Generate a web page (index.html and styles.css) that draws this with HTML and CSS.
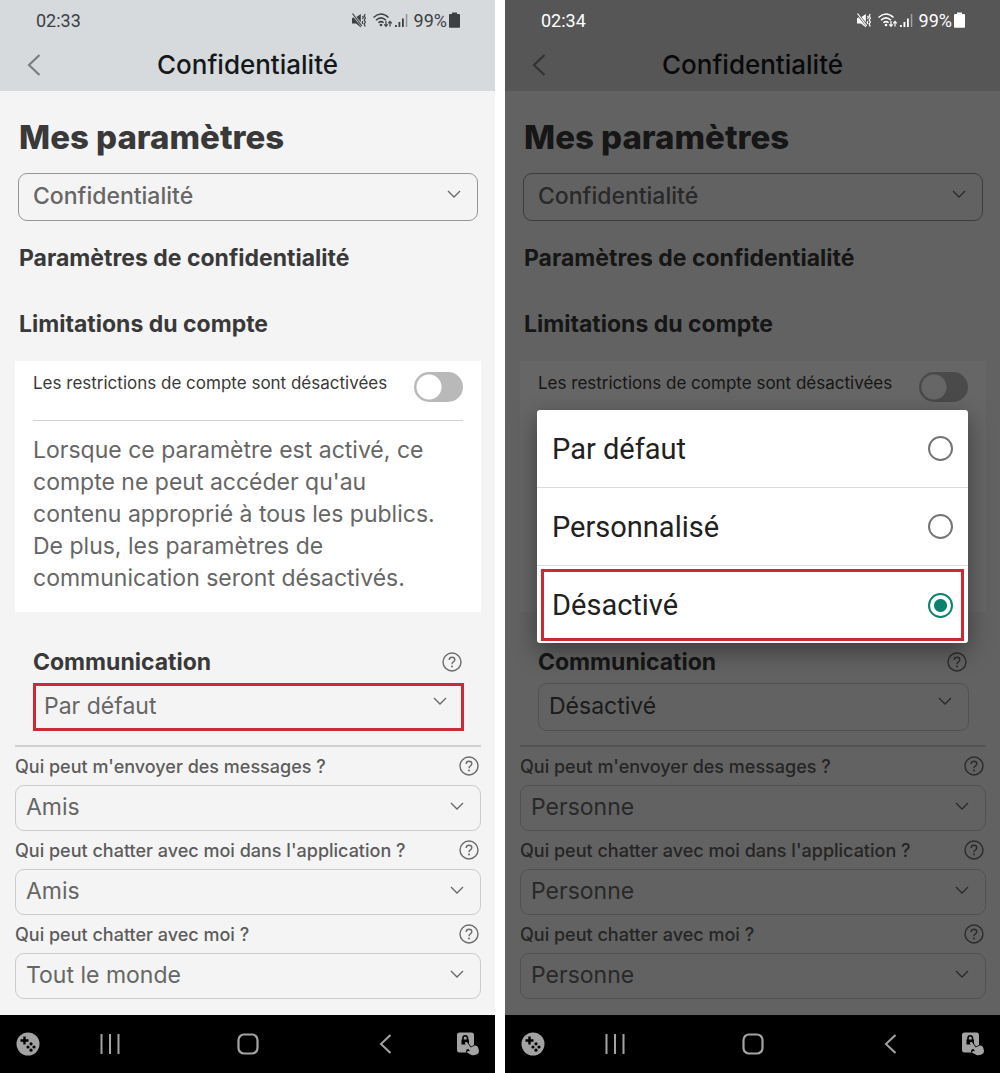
FILE: index.html
```
<!DOCTYPE html>
<html lang="fr">
<head>
    <meta charset="UTF-8">
    <meta name="viewport" content="width=device-width, initial-scale=1.0">
    <title>Confidentialité</title>
    <link rel="stylesheet" href="styles.css">
</head>
<body>
    <!-- icônes partagées -->
    <svg class="sprite" aria-hidden="true">
        <symbol id="i-mute" viewBox="0 0 15 15">
            <path d="M0 5.500L1.500 4.200L9 13.500V14.500L4 10.500H0z" fill="currentColor"/>
            <path d="M4.500 4L8.800 1v8.200z" fill="currentColor"/>
            <path d="M0.500 0.500L9.800 13" stroke="currentColor" stroke-width="1.200"/>
            <path d="M10.500 3l.8 1.500-.8 1.500M13.200 1l-1 2 1.200 2-1.200 2 1.200 2-1.200 2 1 2.500M10.800 8l-.6 1.500.8 1.500" stroke="currentColor" stroke-width="1.200" fill="none"/>
        </symbol>
        <symbol id="i-wifi" viewBox="0 0 19 15">
            <g fill="none" stroke="currentColor" stroke-width="1.500">
                <path d="M0.500 4.500q7.500-7 15 0M3 7.200q5-4.600 10 0M5.400 9.800q2.600-2.300 5.200 0"/>
                <path d="M13 8v5M11.300 11.300l1.700 2 1.700-2M17 13.500v-5M15.300 10.400l1.700-2 1.700 2" stroke-width="1.200"/>
            </g>
            <circle cx="8" cy="12" r="1.300" fill="currentColor"/>
        </symbol>
        <symbol id="i-signal" viewBox="0 0 13 15">
            <path d="M0 12h1.800v2H0zM3.500 9h1.800v5H3.500zM7 5.500h1.800V14H7z" fill="currentColor"/>
            <path d="M10.800 1h1.500v13h-1.500z" fill="currentColor" opacity=".45"/>
        </symbol>
        <symbol id="i-battery" viewBox="0 0 11 16">
            <path d="M3 0.500h5V2h2.200q.8 0 .8.800V15q0 .8-.8.800H.8Q0 15.800 0 15V2.800Q0 2 .8 2H3z" fill="currentColor"/>
        </symbol>
        <symbol id="i-back" viewBox="0 0 14 22">
            <path d="M12.500 1L2 11l10.500 10" fill="none" stroke="currentColor" stroke-width="2.200"/>
        </symbol>
        <symbol id="i-chevron" viewBox="0 0 14 8">
            <path d="M1 1l6 6 6-6" fill="none" stroke="currentColor" stroke-width="1.300"/>
        </symbol>
        <symbol id="i-help" viewBox="0 0 20 20">
            <g fill="none" stroke="currentColor" stroke-width="1.400">
                <circle cx="10" cy="10" r="9"/>
                <path d="M7.200 8Q7.200 5.300 10 5.300T12.800 7.700Q12.800 9 11.400 9.800T10 12.300"/>
            </g>
            <circle cx="10" cy="14.500" r="1" fill="currentColor"/>
        </symbol>
        <symbol id="i-game" viewBox="0 0 24 24">
            <circle cx="12" cy="12" r="11.500" fill="currentColor"/>
            <path d="M8.500 4.500v8M4.500 8.500h8" stroke="#000" stroke-width="2.400"/>
            <g fill="#000">
                <circle cx="15" cy="11.800" r="1.600"/>
                <circle cx="12" cy="15" r="1.600"/>
                <circle cx="18" cy="15" r="1.600"/>
                <circle cx="15" cy="18.200" r="1.600"/>
            </g>
        </symbol>
        <symbol id="i-recent" viewBox="0 0 20 22">
            <path d="M1.500 1v20M10 1v20M18.500 1v20" stroke="currentColor" stroke-width="2"/>
        </symbol>
        <symbol id="i-home" viewBox="0 0 22 22">
            <rect x="1.500" y="1.500" width="19" height="19" rx="5.500" fill="none" stroke="currentColor" stroke-width="2.200"/>
        </symbol>
        <symbol id="i-touch" viewBox="0 0 24 24">
            <path d="M3.500 .5h12q2.500 0 2.500 2.500v17.500H3.500Q1 20.500 1 18V3Q1 .5 3.500 .5z" fill="currentColor"/>
            <path d="M5.500 7.500h7.500v5H5.500z" fill="#000"/>
            <path d="M7 8V6q0-2.300 2.200-2.300T11.500 6v2" fill="none" stroke="#000" stroke-width="1.600"/>
            <path d="M9 10l2.800 0 3.200 4.500 5-2.500 3 1v11h-9l-4-4 .5-2.500 2.500-.5z" fill="#000"/>
            <path d="M9.300 10.300q1.200-.8 2 .3l3.400 5 4-2.100q2.200-.6 3.300 1.700l1 3.300q.3 2.500-2 3.800-3 1.500-5.500.8l-4.200-2.300q-.8-1.500 1-1.800l1.700.2-4.900-7.500q-.5-.8.200-1.400z" fill="currentColor"/>
        </symbol>
    </svg>

    <main class="screens">
        <!-- écran 1 : page de confidentialité -->
        <section class="phone">
            <div class="view">
                <div class="status">
                    <span class="time">02:33</span>
                    <span class="indicators">
                        <svg class="mute"><use href="#i-mute"/></svg>
                        <svg class="wifi"><use href="#i-wifi"/></svg>
                        <svg class="signal"><use href="#i-signal"/></svg>
                        <span>99%</span>
                        <svg class="battery"><use href="#i-battery"/></svg>
                    </span>
                </div>
                <header class="app-bar">
                    <button class="back" type="button" aria-label="Retour"><svg><use href="#i-back"/></svg></button>
                    <span class="app-title">Confidentialité</span>
                </header>
                <div class="content">
                    <h1>Mes paramètres</h1>
                    <div class="select-box section-select">
                        <select aria-label="Section"><option>Confidentialité</option></select>
                        <svg class="chevron"><use href="#i-chevron"/></svg>
                    </div>
                    <h2>Paramètres de confidentialité</h2>
                    <h2>Limitations du compte</h2>
                    <div class="card">
                        <div class="card-head">
                            <label for="restrict-1">Les restrictions de compte sont désactivées</label>
                            <input class="toggle" type="checkbox" id="restrict-1">
                        </div>
                        <p>Lorsque ce paramètre est activé, ce<br>compte ne peut accéder qu'au<br>contenu approprié à tous les publics.<br>De plus, les paramètres de<br>communication seront désactivés.</p>
                    </div>
                    <div class="communication">
                        <div class="label-row">
                            <label for="com-1">Communication</label>
                            <button class="help" type="button" aria-label="Aide"><svg><use href="#i-help"/></svg></button>
                        </div>
                        <div class="select-box marked">
                            <select id="com-1"><option>Par défaut</option><option>Personnalisé</option><option>Désactivé</option></select>
                            <svg class="chevron"><use href="#i-chevron"/></svg>
                        </div>
                    </div>
                    <div class="options">
                        <div class="label-row">
                            <label for="msg-1">Qui peut m'envoyer des messages ?</label>
                            <button class="help" type="button" aria-label="Aide"><svg><use href="#i-help"/></svg></button>
                        </div>
                        <div class="select-box">
                            <select id="msg-1"><option>Amis</option></select>
                            <svg class="chevron"><use href="#i-chevron"/></svg>
                        </div>
                        <div class="label-row">
                            <label for="app-1">Qui peut chatter avec moi dans l'application ?</label>
                            <button class="help" type="button" aria-label="Aide"><svg><use href="#i-help"/></svg></button>
                        </div>
                        <div class="select-box">
                            <select id="app-1"><option>Amis</option></select>
                            <svg class="chevron"><use href="#i-chevron"/></svg>
                        </div>
                        <div class="label-row">
                            <label for="chat-1">Qui peut chatter avec moi ?</label>
                            <button class="help" type="button" aria-label="Aide"><svg><use href="#i-help"/></svg></button>
                        </div>
                        <div class="select-box">
                            <select id="chat-1"><option>Tout le monde</option></select>
                            <svg class="chevron"><use href="#i-chevron"/></svg>
                        </div>
                    </div>
                </div>
            </div>
            <nav class="nav-bar">
                <button type="button" aria-label="Jeux"><svg class="big"><use href="#i-game"/></svg></button>
                <button type="button" aria-label="Récents"><svg class="recent"><use href="#i-recent"/></svg></button>
                <button type="button" aria-label="Accueil"><svg class="home"><use href="#i-home"/></svg></button>
                <button type="button" aria-label="Retour"><svg class="prev"><use href="#i-back"/></svg></button>
                <button type="button" aria-label="Verrouillage tactile"><svg class="big"><use href="#i-touch"/></svg></button>
            </nav>
        </section>

        <!-- écran 2 : choix ouvert par-dessus la page -->
        <section class="phone dimmed">
            <div class="view">
                <div class="status">
                    <span class="time">02:34</span>
                    <span class="indicators">
                        <svg class="mute"><use href="#i-mute"/></svg>
                        <svg class="wifi"><use href="#i-wifi"/></svg>
                        <svg class="signal"><use href="#i-signal"/></svg>
                        <span>99%</span>
                        <svg class="battery"><use href="#i-battery"/></svg>
                    </span>
                </div>
                <header class="app-bar">
                    <button class="back" type="button" aria-label="Retour"><svg><use href="#i-back"/></svg></button>
                    <span class="app-title">Confidentialité</span>
                </header>
                <div class="content">
                    <h1>Mes paramètres</h1>
                    <div class="select-box section-select">
                        <select aria-label="Section"><option>Confidentialité</option></select>
                        <svg class="chevron"><use href="#i-chevron"/></svg>
                    </div>
                    <h2>Paramètres de confidentialité</h2>
                    <h2>Limitations du compte</h2>
                    <div class="card">
                        <div class="card-head">
                            <label for="restrict-2">Les restrictions de compte sont désactivées</label>
                            <input class="toggle" type="checkbox" id="restrict-2">
                        </div>
                        <p></p>
                    </div>
                    <div class="communication">
                        <div class="label-row">
                            <label for="com-2">Communication</label>
                            <button class="help" type="button" aria-label="Aide"><svg><use href="#i-help"/></svg></button>
                        </div>
                        <div class="select-box">
                            <select id="com-2"><option>Désactivé</option></select>
                            <svg class="chevron"><use href="#i-chevron"/></svg>
                        </div>
                    </div>
                    <div class="options">
                        <div class="label-row">
                            <label for="msg-2">Qui peut m'envoyer des messages ?</label>
                            <button class="help" type="button" aria-label="Aide"><svg><use href="#i-help"/></svg></button>
                        </div>
                        <div class="select-box">
                            <select id="msg-2"><option>Personne</option></select>
                            <svg class="chevron"><use href="#i-chevron"/></svg>
                        </div>
                        <div class="label-row">
                            <label for="app-2">Qui peut chatter avec moi dans l'application ?</label>
                            <button class="help" type="button" aria-label="Aide"><svg><use href="#i-help"/></svg></button>
                        </div>
                        <div class="select-box">
                            <select id="app-2"><option>Personne</option></select>
                            <svg class="chevron"><use href="#i-chevron"/></svg>
                        </div>
                        <div class="label-row">
                            <label for="chat-2">Qui peut chatter avec moi ?</label>
                            <button class="help" type="button" aria-label="Aide"><svg><use href="#i-help"/></svg></button>
                        </div>
                        <div class="select-box">
                            <select id="chat-2"><option>Personne</option></select>
                            <svg class="chevron"><use href="#i-chevron"/></svg>
                        </div>
                    </div>
                </div>
                <div class="overlay"></div>
                <div class="dialog" role="dialog" aria-label="Communication">
                    <label class="choice">Par défaut<input type="radio" name="choice"></label>
                    <label class="choice">Personnalisé<input type="radio" name="choice"></label>
                    <label class="choice marked">Désactivé<input type="radio" name="choice" checked></label>
                </div>
            </div>
            <nav class="nav-bar">
                <button type="button" aria-label="Jeux"><svg class="big"><use href="#i-game"/></svg></button>
                <button type="button" aria-label="Récents"><svg class="recent"><use href="#i-recent"/></svg></button>
                <button type="button" aria-label="Accueil"><svg class="home"><use href="#i-home"/></svg></button>
                <button type="button" aria-label="Retour"><svg class="prev"><use href="#i-back"/></svg></button>
                <button type="button" aria-label="Verrouillage tactile"><svg class="big"><use href="#i-touch"/></svg></button>
            </nav>
        </section>
    </main>
</body>
</html>
```

FILE: styles.css
```
* {
    box-sizing: border-box;
}
body {
    margin: 0;
    background-color: #fff;
    color: #393939;
    font-family: Inter, "Liberation Sans", sans-serif;
}
button {
    padding: 0;
    border: none;
    background: none;
    color: inherit;
    cursor: pointer;
}
svg {
    display: block;
}
.sprite {
    display: none;
}
.screens {
    display: grid;
    grid-template-columns: 1fr 1fr;
    gap: 10px;
    min-height: 100vh;
}
.phone {
    --bar: #d6dadd;
    display: flex;
    flex-direction: column;
    background-color: #f4f4f4;
}
.view {
    position: relative;
    flex: 1;
}

/* barre d'état */
.status {
    display: flex;
    align-items: center;
    justify-content: space-between;
    height: 40px;
    padding: 0 35px 0 36px;
    background-color: var(--bar);
    color: #3c4043;
    font-family: Roboto, sans-serif;
    font-size: 18px;
}
.indicators {
    display: flex;
    align-items: center;
    gap: 6px;
}
.mute {
    width: 15px;
    height: 15px;
}
.wifi {
    width: 19px;
    height: 15px;
}
.signal {
    width: 13px;
    height: 15px;
    margin-left: -3px;
}
.battery {
    width: 11px;
    height: 16px;
    margin-left: -4px;
}

/* en-tête */
.app-bar {
    display: grid;
    grid-template-columns: 40px 1fr 40px;
    align-items: center;
    height: 51px;
    padding: 0 14px 2px;
    background-color: var(--bar);
}
.back {
    justify-self: center;
    color: #7b7e80;
}
.back svg {
    width: 14px;
    height: 22px;
}
.app-title {
    color: #15181a;
    font-size: 26px;
    font-weight: 500;
    text-align: center;
}

/* contenu */
.content {
    padding: 26px 14px 16px 15px;
}
h1 {
    margin: 0 4px 16px;
    font-size: 33px;
    font-weight: 800;
    line-height: 40px;
}
h2 {
    margin: 0 4px 36px;
    font-size: 23px;
    font-weight: 700;
    line-height: 30px;
}
.select-box {
    position: relative;
    color: #666;
}
.select-box select {
    display: block;
    width: 100%;
    height: 46px;
    padding: 0 40px 2px 10px;
    border: 1px solid #cbcbcb;
    border-radius: 9px;
    appearance: none;
    background-color: transparent;
    color: inherit;
    font-family: inherit;
    font-size: 23px;
}
.chevron {
    position: absolute;
    top: 17px;
    right: 17px;
    width: 14px;
    height: 8px;
    pointer-events: none;
}
.section-select {
    margin: 0 3px 22px;
}
.section-select select {
    height: 48px;
    padding-left: 14px;
    border-color: #969696;
    font-weight: 500;
}
.card {
    margin-bottom: 36px;
    margin-top: -14px;
    padding: 11px 18px 18px;
    background-color: #fff;
}
.card-head {
    display: flex;
    justify-content: space-between;
    height: 49px;
    margin-bottom: 13px;
    border-bottom: 1px solid #d0d0d0;
}
.card-head label {
    font-size: 17px;
    line-height: 22px;
}
.toggle {
    width: 49px;
    height: 30px;
    margin: 0;
    border-radius: 15px;
    appearance: none;
    background: radial-gradient(circle at 15px 15px, #fff 12px, transparent 13px) #b9b9b9;
}
.card p {
    min-height: 160px;
    margin: 0;
    color: #666;
    font-size: 23px;
    line-height: 32px;
}
.communication {
    padding: 0 17px 14px 18px;
    border-bottom: 2px solid #d0d0d0;
}
.label-row {
    display: flex;
    align-items: center;
    justify-content: space-between;
    height: 38px;
    padding-right: 2px;
}
.options .label-row {
    color: #5c5c5c;
    font-size: 18px;
    font-weight: 500;
}
.communication .label-row {
    height: 28px;
    margin-bottom: 7px;
    font-size: 23px;
    font-weight: 700;
}
.communication .select-box select {
    height: 48px;
}
.communication .chevron {
    top: 14px;
}
.help {
    color: #6b6b6b;
}
.help svg {
    width: 20px;
    height: 20px;
}
.marked {
    outline: 3px solid #cc2a32;
    outline-offset: -3px;
}
.select-box.marked select {
    border-color: transparent;
}

/* boîte de choix */
.dimmed .time,
.dimmed .indicators {
    position: relative;
    z-index: 2;
    color: #fff;
}
.dimmed {
    --bar: #d6d6d6;
}
.dimmed .communication select {
    color: #444;
}
.overlay {
    position: absolute;
    inset: 0;
    z-index: 1;
    background-color: rgba(0, 0, 0, 0.6);
}
.dialog {
    position: absolute;
    top: 410px;
    right: 32px;
    left: 32px;
    z-index: 2;
    border-radius: 3px;
    background-color: #fff;
    box-shadow: 0 8px 24px rgba(0, 0, 0, 0.4);
    color: #212121;
    font-family: Roboto, sans-serif;
    font-size: 29px;
}
.choice {
    display: flex;
    align-items: center;
    justify-content: space-between;
    height: 78px;
    padding: 0 15px;
    border-bottom: 1px solid #dcdcdc;
}
.choice.marked {
    height: 72px;
    margin: 3px 4px 2px;
    padding: 0 11px;
    border-bottom: none;
}
.choice input {
    width: 25px;
    height: 25px;
    margin: 0;
    border: 2px solid #757575;
    border-radius: 50%;
    appearance: none;
}
.choice input:checked {
    border-color: #0b8270;
    background: radial-gradient(circle, #0b8270 6px, transparent 7px);
}

/* barre de navigation */
.nav-bar {
    display: grid;
    grid-template-columns: 1fr 2fr 3fr 2fr 1fr;
    align-items: center;
    justify-items: center;
    height: 58px;
    background-color: #000;
    color: #a3a3a3;
}
.big {
    width: 24px;
    height: 24px;
}
.recent {
    width: 20px;
    height: 22px;
}
.home {
    width: 22px;
    height: 22px;
}
.prev {
    width: 13px;
    height: 20px;
}
```
